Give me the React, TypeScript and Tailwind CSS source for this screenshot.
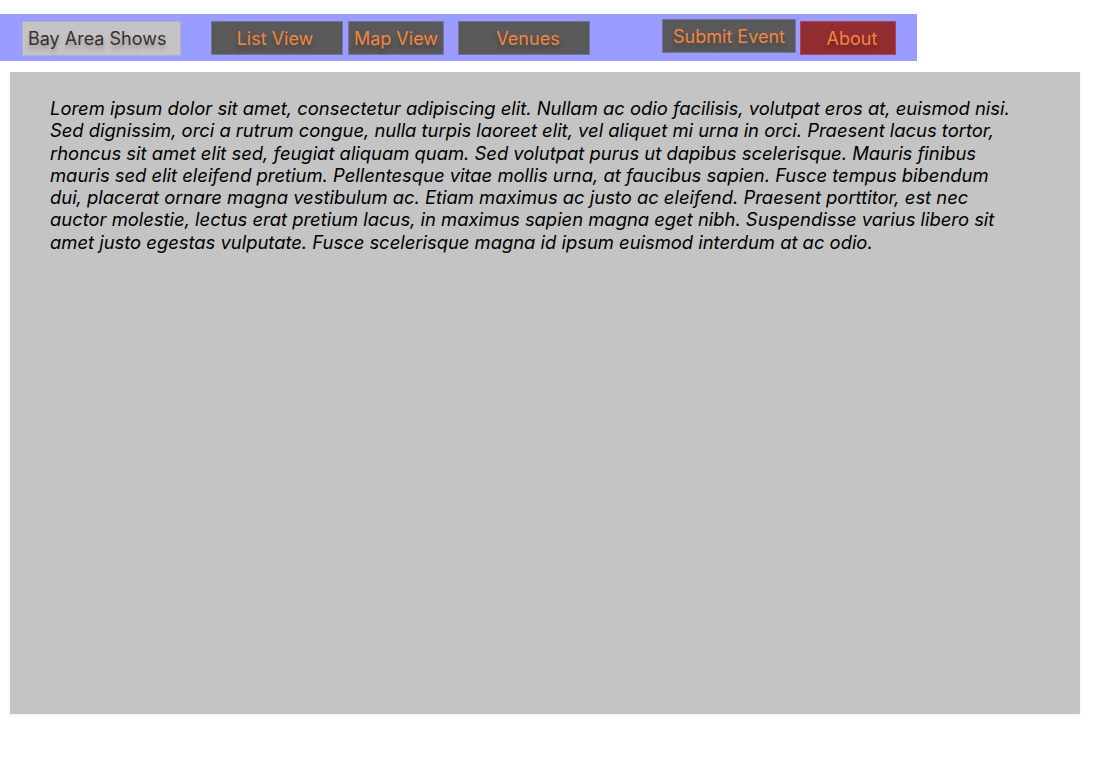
import React from 'react';

const lorem =
  'Lorem ipsum dolor sit amet, consectetur adipiscing elit. Nullam ac odio facilisis, volutpat eros at, euismod nisi. Sed dignissim, orci a rutrum congue, nulla turpis laoreet elit, vel aliquet mi urna in orci. Praesent lacus tortor, rhoncus sit amet elit sed, feugiat aliquam quam. Sed volutpat purus ut dapibus scelerisque. Mauris finibus mauris sed elit eleifend pretium. Pellentesque vitae mollis urna, at faucibus sapien. Fusce tempus bibendum dui, placerat ornare magna vestibulum ac. Etiam maximus ac justo ac eleifend. Praesent porttitor, est nec auctor molestie, lectus erat pretium lacus, in maximus sapien magna eget nibh. Suspendisse varius libero sit amet justo egestas vulputate. Fusce scelerisque magna id ipsum euismod interdum at ac odio.';

// Dark nav buttons share the same look
const navBtn =
  'flex items-center justify-center bg-[#595959] border border-[#74749c] text-[#f5843f] text-[18px] [text-shadow:0_4px_4px_rgba(0,0,0,0.25)]';

export default function App() {
  return (
    <div className="min-h-[782px] bg-white pt-[14px] font-['Inter',sans-serif]">
      {/* Top nav */}
      <nav className="flex items-start w-[917px] h-[47px] bg-[#9a9cff]">
        <div className="ml-[22px] mt-[7px] w-[159px] h-[35px] flex items-center pl-[5px] bg-[#c4c4c4] border border-[#b0b0c8] text-[#3b2d2d] text-[18px] [text-shadow:0_4px_4px_rgba(0,0,0,0.25)]">
          Bay Area Shows
        </div>
        <div className={`${navBtn} ml-[30px] mt-[7px] w-[132px] h-[34px]`}>
          <span className="-ml-1">List View</span>
        </div>
        <div className={`${navBtn} ml-[5px] mt-[7px] w-[96px] h-[34px]`}>Map View</div>
        <div className={`${navBtn} ml-[14px] mt-[7px] w-[132px] h-[34px]`}>
          <span className="ml-2">Venues</span>
        </div>
        <div className={`${navBtn} ml-[72px] mt-[5px] w-[134px] h-[34px]`}>Submit Event</div>
        <div className="ml-[4px] mt-[7px] w-[96px] h-[34px] flex items-center justify-center bg-[#922d31] border border-[#b2405a] text-[#f5843f] text-[18px] [text-shadow:0_4px_4px_rgba(0,0,0,0.25)]">
          <span className="ml-2">About</span>
        </div>
      </nav>

      {/* Main content panel */}
      <main className="ml-[10px] mt-[11px] w-[1070px] h-[642px] bg-[#c4c4c4] shadow-[0_1px_2px_rgba(0,0,0,0.08)] pl-[40px] pr-[62px] pt-[25px]">
        <p className="italic text-black text-[18.4px] leading-[22.3px]">{lorem}</p>
      </main>
    </div>
  );
}
